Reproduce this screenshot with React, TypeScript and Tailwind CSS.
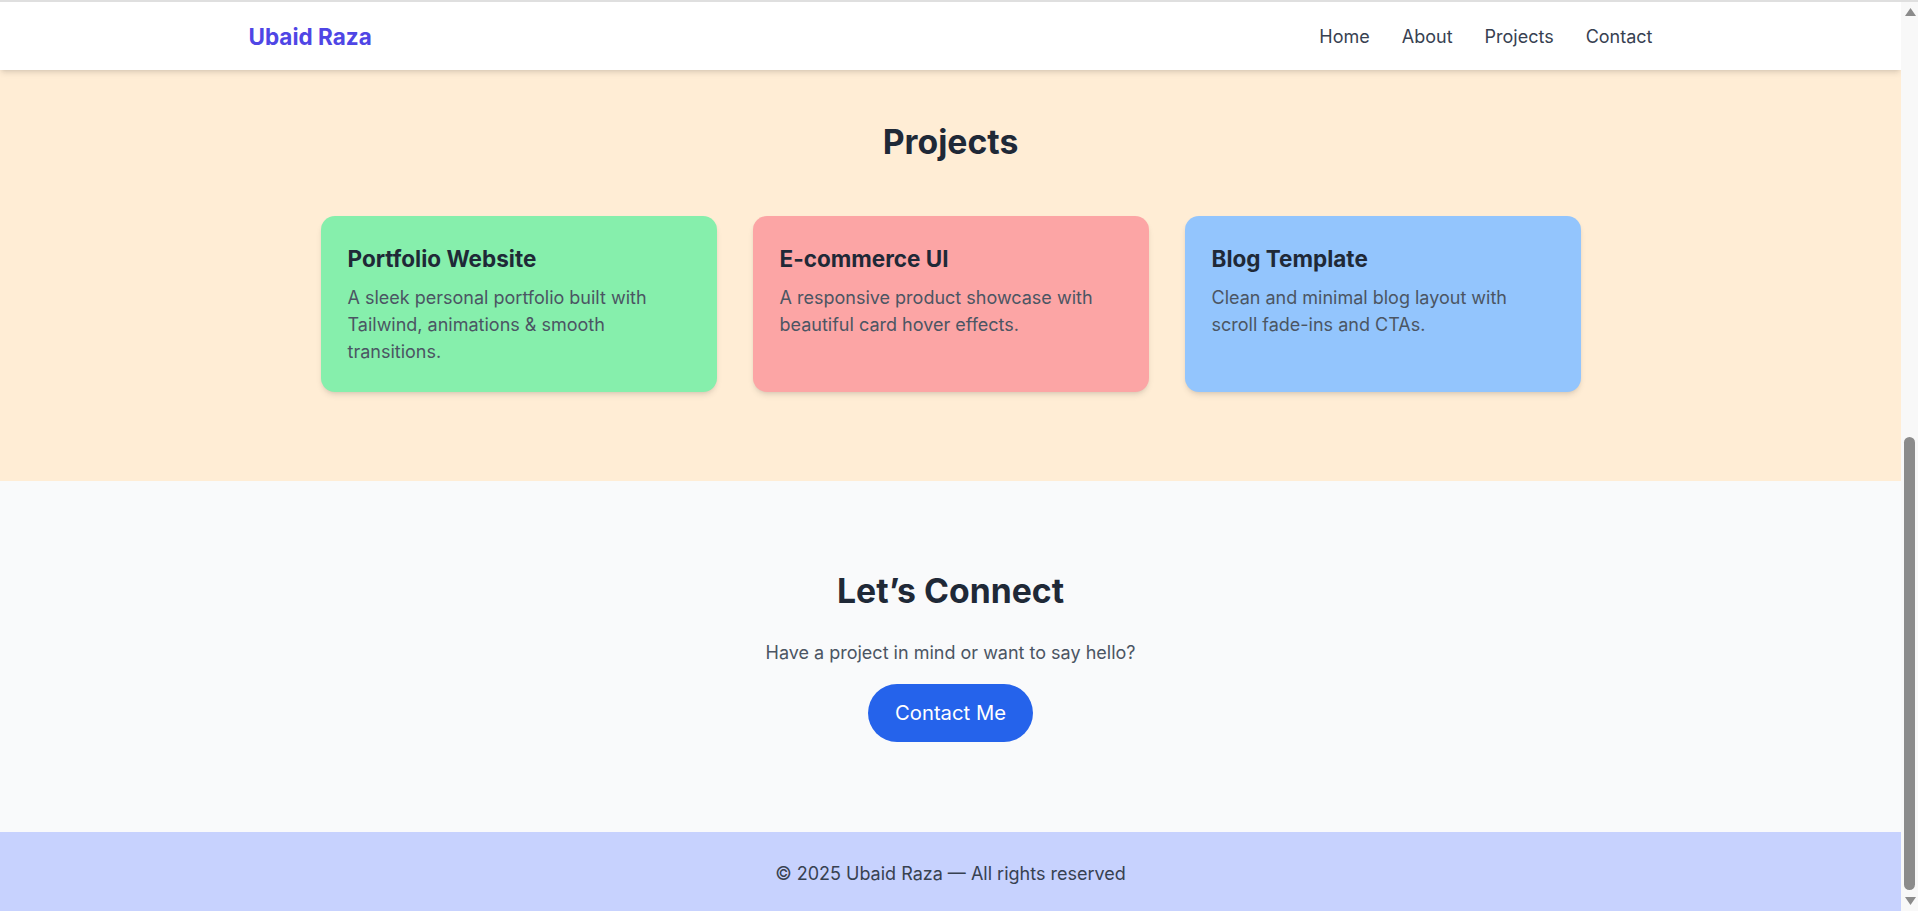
import React from 'react';

const navLinks = ['Home', 'About', 'Projects', 'Contact'];

const projects = [
  {
    title: 'Portfolio Website',
    text: 'A sleek personal portfolio built with Tailwind, animations & smooth transitions.',
    color: 'bg-[#86efac]',
  },
  {
    title: 'E-commerce UI',
    text: 'A responsive product showcase with beautiful card hover effects.',
    color: 'bg-[#fca5a5]',
  },
  {
    title: 'Blog Template',
    text: 'Clean and minimal blog layout with scroll fade-ins and CTAs.',
    color: 'bg-[#93c5fd]',
  },
];

function Header() {
  return (
    <header className="relative z-10 h-[68px] shrink-0 bg-white shadow-md">
      <div className="mx-auto flex h-full w-[1404px] items-center justify-between">
        <a href="#home" className="text-[22.5px] leading-[31px] font-bold text-[#4f46e5]">
          Ubaid Raza
        </a>
        <nav className="flex items-center gap-[32px] text-[18px] leading-[27px] text-[#374151]">
          {navLinks.map((link) => (
            <a key={link} href={`#${link.toLowerCase()}`}>
              {link}
            </a>
          ))}
        </nav>
      </div>
    </header>
  );
}

function Projects() {
  return (
    <section id="projects" className="shrink-0 bg-[#ffedd5] pt-[52px] pb-[89px]">
      <h2 className="mb-[53px] text-center text-[33.75px] leading-[40.5px] font-bold text-[#1f2937]">
        Projects
      </h2>
      <div className="mx-auto grid w-[1260px] grid-cols-3 gap-[36px]">
        {projects.map((p) => (
          <div key={p.title} className={`${p.color} rounded-[14px] p-[27px] shadow-md`}>
            <h3 className="mb-[10px] text-[22.5px] leading-[31.5px] font-bold text-[#1f2937]">
              {p.title}
            </h3>
            <p className="text-[18px] leading-[27px] text-[#4b5563]">{p.text}</p>
          </div>
        ))}
      </div>
    </section>
  );
}

function Contact() {
  return (
    <section id="contact" className="shrink-0 bg-[#f9fafb] py-[90px] text-center">
      <h2 className="mb-[27px] text-[33.75px] leading-[40.5px] font-bold text-[#1f2937]">
        Let’s Connect
      </h2>
      <p className="mb-[18px] text-[18px] leading-[27px] text-[#4b5563]">
        Have a project in mind or want to say hello?
      </p>
      <a
        href="#contact"
        className="inline-block rounded-full bg-[#2563eb] px-[27px] py-[13.5px] text-[20.25px] leading-[31.5px] text-white"
      >
        Contact Me
      </a>
    </section>
  );
}

function Footer() {
  return (
    <footer className="shrink-0 bg-[#c7d2fe] pt-[28px] pb-[26px] text-center text-[18px] leading-[27px] text-[#374151]">
      © 2025 Ubaid Raza — All rights reserved
    </footer>
  );
}

function ScrollBar() {
  return (
    <div className="flex w-[17px] shrink-0 flex-col bg-[#f8f8f8]">
      <svg width="17" height="17" viewBox="0 0 17 17" className="shrink-0">
        <polygon points="4,14 15,14 9.5,6" fill="#8b8b8b" />
      </svg>
      <div className="flex-1 pt-[418px]">
        <div className="mx-auto h-[453px] w-[11px] rounded-full bg-[#8b8b8b]" />
      </div>
      <svg width="17" height="17" viewBox="0 0 17 17" className="shrink-0">
        <polygon points="4,3 15,3 9.5,11" fill="#8b8b8b" />
      </svg>
    </div>
  );
}

export default function App() {
  return (
    <div className="flex h-screen flex-col overflow-hidden bg-white font-['Inter',sans-serif]">
      <div className="h-[2px] shrink-0 bg-[#dfdfdf]" />
      <div className="flex min-h-0 flex-1">
        <div className="flex min-w-0 flex-1 flex-col overflow-hidden">
          <Header />
          <Projects />
          <Contact />
          <Footer />
        </div>
        <ScrollBar />
      </div>
    </div>
  );
}
